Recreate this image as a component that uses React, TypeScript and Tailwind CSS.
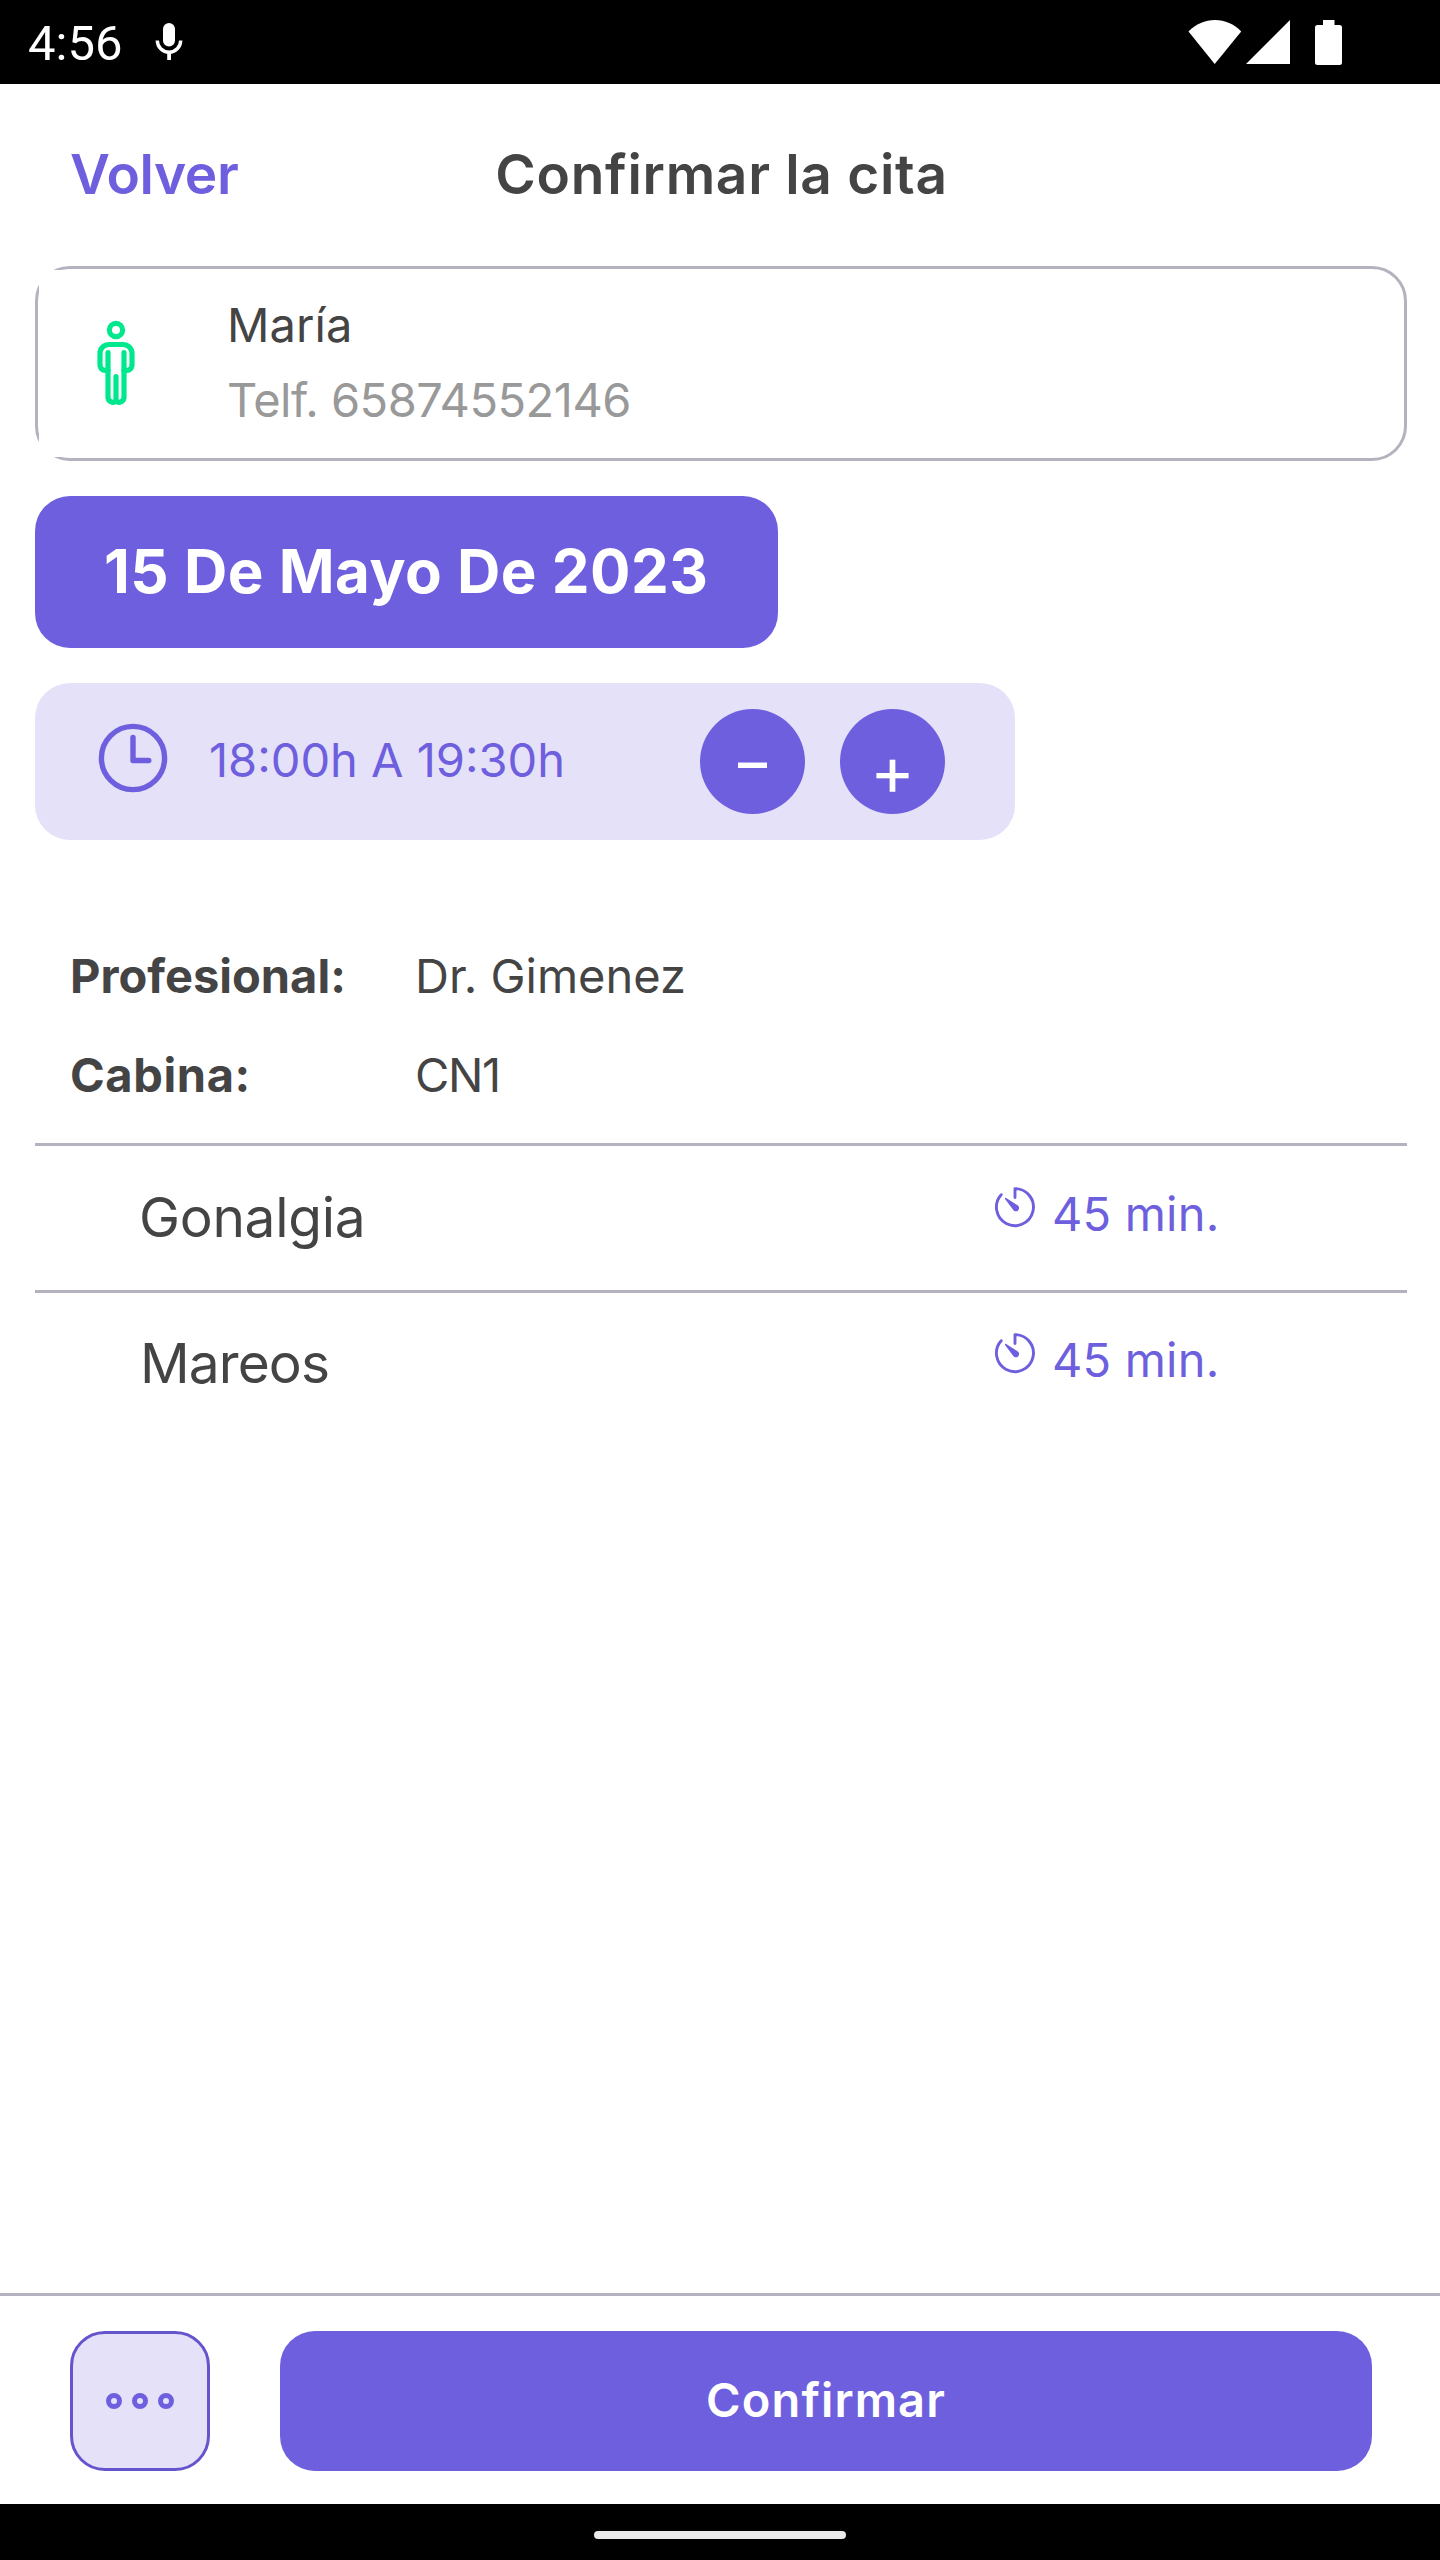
const treatments = [
  { name: "Gonalgia", duration: "45 min.", nameClass: "ml-[104px] w-[851px] tracking-[-0.3px]" },
  { name: "Mareos", duration: "45 min.", nameClass: "ml-[105px] w-[850px] tracking-[-0.9px]" },
];

function StatusBar() {
  return (
    <div className="flex h-[84px] shrink-0 items-center bg-black pr-[98px] pl-7 text-white">
      <span className="pt-1 font-['Roboto',sans-serif] text-[49px] leading-[84px]">4:56</span>
      <svg viewBox="0 0 28 38" className="ml-[33px] h-[38px] w-7" fill="currentColor">
        <rect x="8" y="0" width="12" height="23.5" rx="6" />
        <path d="M2.3 17.5a11.7 11.7 0 0 0 23.4 0" fill="none" stroke="currentColor" strokeWidth="3.4" />
        <path d="M12.2 29h3.8v8h-3.8z" />
      </svg>
      <div className="ml-auto flex items-center">
        <svg viewBox="0 0 54 46" className="h-[46px] w-[54px]" fill="currentColor">
          <path d="M0.5 12.5C8 5 17 1 27 1s19 4 26.2 11.5L26.7 45z" />
        </svg>
        <svg viewBox="0 0 46 46" className="ml-[3px] h-[46px] w-[46px]" fill="currentColor">
          <path d="M45 1v44H1z" />
        </svg>
        <svg viewBox="0 0 27 46" className="ml-6 h-[46px] w-[27px]" fill="currentColor">
          <path d="M8 1h11.5v5h5a2.5 2.5 0 0 1 2.5 2.5v35a2.5 2.5 0 0 1-2.5 2.5h-22A2.5 2.5 0 0 1 0 43.5v-35A2.5 2.5 0 0 1 2.5 6H8z" />
        </svg>
      </div>
    </div>
  );
}

function PersonIcon() {
  return (
    <svg
      viewBox="0 0 38 86"
      className="h-[86px] w-[38px]"
      fill="none"
      stroke="#00e88d"
      strokeWidth="5.2"
      strokeLinecap="round"
      strokeLinejoin="round"
    >
      <circle cx="19" cy="10" r="6.6" />
      <path d="M11 32.5V77a5 5 0 0 0 8 4.2 5 5 0 0 0 8-4.200V32.5" />
      <path d="M11 50.300H8a5 5 0 0 1-5-5V33a9 9 0 0 1 9-8.5h14a9 9 0 0 1 9 8.5v12.3a5 5 0 0 1-5 5h-3" />
      <path d="M19 56.5V80" />
    </svg>
  );
}

function ClockIcon() {
  return (
    <svg
      viewBox="0 0 70 70"
      className="h-[70px] w-[70px]"
      fill="none"
      stroke="#6e5fde"
      strokeWidth="5.4"
      strokeLinecap="round"
      strokeLinejoin="round"
    >
      <circle cx="35" cy="35" r="31.6" />
      <path d="M35 14.5v23h15.8" />
    </svg>
  );
}

function TimerIcon() {
  return (
    <svg viewBox="0 0 42 42" className="h-[42px] w-[42px]" fill="none" stroke="#6e5fde" strokeWidth="2.9">
      <path d="M21 11.5V2.6a18.5 18.5 0 1 1-13.8 6.1" strokeLinecap="round" strokeLinejoin="round" />
      <path d="M11 12.2c.3-.6.7-.6 1.2-.3l11.3 7.3a3.3 3.3 0 1 1-4.6 4.4L11 13z" fill="#6e5fde" stroke="none" />
    </svg>
  );
}

export default function App() {
  return (
    <div className="flex h-[2560px] w-[1440px] flex-col bg-white font-['Inter',sans-serif] text-[47px] text-[#444444]">
      <StatusBar />

      <header className="grid h-[182px] shrink-0 grid-cols-[1fr_auto_1fr] items-center px-[70px] pb-[2px] text-[55px] leading-[60px] font-semibold">
        <button className="justify-self-start text-left tracking-[-0.4px] text-[#6e5fde]">Volver</button>
        <h1 className="pl-[3px] tracking-[0.7px]">Confirmar la cita</h1>
      </header>

      <main className="flex grow flex-col pr-[33px] pl-[35px]">
        <section className="flex h-[195px] rounded-[35px] border-[3px] border-[#b4b2be] p-px">
          <div className="flex w-[188px] items-center bg-white pb-px pl-[58px]">
            <PersonIcon />
          </div>
          <div className="-mt-[3px] flex flex-col justify-center leading-[75px]">
            <p className="tracking-[0.1px]">María</p>
            <p className="tracking-[-0.5px] text-[#999999]">Telf. 65874552146</p>
          </div>
        </section>

        <div className="mt-[35px] flex h-[152px] w-[743px] items-center rounded-[35px] bg-[#6e5fde] pb-[2px] pl-[69px] text-[60px] leading-[72px] font-bold tracking-[0.5px] text-white">
          15 De Mayo De 2023
        </div>

        <div className="mt-[35px] flex h-[157px] w-[980px] items-center rounded-[35px] bg-[#e5e1f8] pl-[63px] text-[#6e5fde]">
          <div className="-mt-[7px]">
            <ClockIcon />
          </div>
          <span className="-mt-[2px] ml-[41px] w-[491px]">18:00h A 19:30h</span>
          <button className="flex size-[105px] items-center justify-center rounded-full bg-[#6e5fde] text-[58px] leading-[60px] font-medium text-white">
            –
          </button>
          <button className="ml-[35px] flex size-[105px] items-center justify-center rounded-full bg-[#6e5fde] pt-[16px] text-[68px] leading-[60px] text-white">
            +
          </button>
        </div>

        <dl className="mt-[86px] grid grid-cols-[345px_1fr] pl-[35px] leading-[99px]">
          <dt className="font-bold">Profesional:</dt>
          <dd>Dr. Gimenez</dd>
          <dt className="font-bold tracking-[0.6px]">Cabina:</dt>
          <dd className="tracking-[-1.4px]">CN1</dd>
        </dl>

        <ul className="mt-[19px]">
          {treatments.map((treatment) => (
            <li
              key={treatment.name}
              className="flex h-[147px] items-center border-t-[3px] border-[#b4b2be] pb-[2px] last:pb-1"
            >
              <span className={`shrink-0 text-[55px] leading-[60px] ${treatment.nameClass}`}>{treatment.name}</span>
              <div className="ml-[4px] flex items-center text-[#6e5fde]">
                <div className="-mt-[20px]">
                  <TimerIcon />
                </div>
                <span className="-mt-[5px] ml-4 tracking-[0.2px]">{treatment.duration}</span>
              </div>
            </li>
          ))}
        </ul>
      </main>

      <footer className="flex h-[211px] shrink-0 items-start gap-[70px] border-t-[3px] border-[#b4b2be] pt-[35px] pr-[68px] pb-[33px] pl-[70px]">
        <button className="flex size-[140px] shrink-0 items-center justify-center gap-[10.3px] rounded-[35px] border-[3px] border-[#6555cd] bg-[#e5e1f8]">
          <span className="size-4 rounded-full border-[5px] border-[#6e5fde]" />
          <span className="size-4 rounded-full border-[5px] border-[#6e5fde]" />
          <span className="size-4 rounded-full border-[5px] border-[#6e5fde]" />
        </button>
        <button className="h-[140px] w-[1092px] rounded-[35px] bg-[#6e5fde] pb-[2px] font-semibold tracking-[1.1px] text-white">
          Confirmar
        </button>
      </footer>

      <div className="flex h-14 shrink-0 justify-center bg-black pt-[27px]">
        <div className="h-2 w-[252px] rounded-full bg-[#ebebeb]" />
      </div>
    </div>
  );
}
